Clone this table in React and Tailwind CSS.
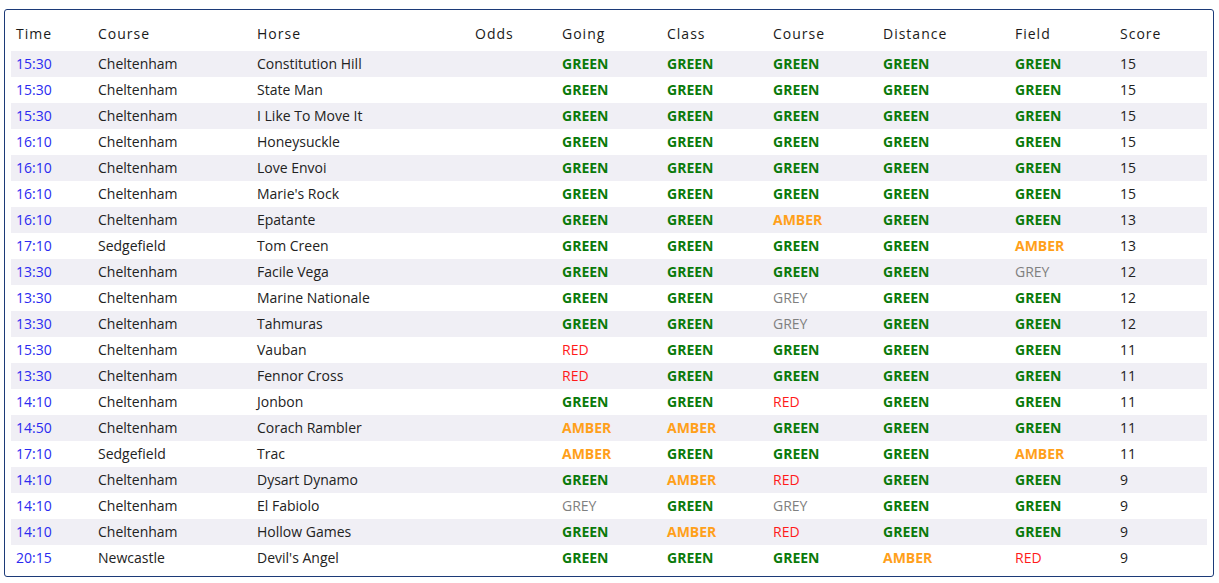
import React from 'react';

// runner rows, in score order
const rows = [
    ['15:30', 'Cheltenham', 'Constitution Hill', 'GREEN', 'GREEN', 'GREEN', 'GREEN', 'GREEN', 15],
    ['15:30', 'Cheltenham', 'State Man', 'GREEN', 'GREEN', 'GREEN', 'GREEN', 'GREEN', 15],
    ['15:30', 'Cheltenham', 'I Like To Move It', 'GREEN', 'GREEN', 'GREEN', 'GREEN', 'GREEN', 15],
    ['16:10', 'Cheltenham', 'Honeysuckle', 'GREEN', 'GREEN', 'GREEN', 'GREEN', 'GREEN', 15],
    ['16:10', 'Cheltenham', 'Love Envoi', 'GREEN', 'GREEN', 'GREEN', 'GREEN', 'GREEN', 15],
    ['16:10', 'Cheltenham', "Marie's Rock", 'GREEN', 'GREEN', 'GREEN', 'GREEN', 'GREEN', 15],
    ['16:10', 'Cheltenham', 'Epatante', 'GREEN', 'GREEN', 'AMBER', 'GREEN', 'GREEN', 13],
    ['17:10', 'Sedgefield', 'Tom Creen', 'GREEN', 'GREEN', 'GREEN', 'GREEN', 'AMBER', 13],
    ['13:30', 'Cheltenham', 'Facile Vega', 'GREEN', 'GREEN', 'GREEN', 'GREEN', 'GREY', 12],
    ['13:30', 'Cheltenham', 'Marine Nationale', 'GREEN', 'GREEN', 'GREY', 'GREEN', 'GREEN', 12],
    ['13:30', 'Cheltenham', 'Tahmuras', 'GREEN', 'GREEN', 'GREY', 'GREEN', 'GREEN', 12],
    ['15:30', 'Cheltenham', 'Vauban', 'RED', 'GREEN', 'GREEN', 'GREEN', 'GREEN', 11],
    ['13:30', 'Cheltenham', 'Fennor Cross', 'RED', 'GREEN', 'GREEN', 'GREEN', 'GREEN', 11],
    ['14:10', 'Cheltenham', 'Jonbon', 'GREEN', 'GREEN', 'RED', 'GREEN', 'GREEN', 11],
    ['14:50', 'Cheltenham', 'Corach Rambler', 'AMBER', 'AMBER', 'GREEN', 'GREEN', 'GREEN', 11],
    ['17:10', 'Sedgefield', 'Trac', 'AMBER', 'GREEN', 'GREEN', 'GREEN', 'AMBER', 11],
    ['14:10', 'Cheltenham', 'Dysart Dynamo', 'GREEN', 'AMBER', 'RED', 'GREEN', 'GREEN', 9],
    ['14:10', 'Cheltenham', 'El Fabiolo', 'GREY', 'GREEN', 'GREY', 'GREEN', 'GREEN', 9],
    ['14:10', 'Cheltenham', 'Hollow Games', 'GREEN', 'AMBER', 'RED', 'GREEN', 'GREEN', 9],
    ['20:15', 'Newcastle', "Devil's Angel", 'GREEN', 'GREEN', 'GREEN', 'AMBER', 'RED', 9],
];

const headers = [
    ['Time', 'w-[82px]'],
    ['Course', 'w-[159px]'],
    ['Horse', 'w-[218px]'],
    ['Odds', 'w-[87px]'],
    ['Going', 'w-[105px]'],
    ['Class', 'w-[106px]'],
    ['Course', 'w-[110px]'],
    ['Distance', 'w-[132px]'],
    ['Field', 'w-[105px]'],
    ['Score', 'w-[92px]'],
];

const ratingClass = {
    GREEN: 'text-[#0a7a0a] font-bold',
    AMBER: 'text-[#ffa01a] font-bold',
    RED: 'text-[#ff1a1a]',
    GREY: 'text-[#808080]',
};

function Rating({ value }) {
    return <td className={`px-[5px] ${ratingClass[value]}`}>{value}</td>;
}

export default function App() {
    return (
        <div className="pt-[9px] pl-[4px] font-['Open_Sans',sans-serif] text-[14px] text-[#222]">
            <div className="w-[1210px] border border-[#1c3a78] rounded-[3px] pl-[6px] pr-[6px] pb-[5px]">
                <table className="w-[1196px] table-fixed border-collapse">
                    <thead>
                        <tr>
                            {headers.map(([label, w], i) => (
                                <th
                                    key={i}
                                    className={`${w} px-[5px] pt-[12px] pb-[6px] text-left font-normal tracking-[1px] leading-[23px] text-[#1a1a1a]`}
                                >
                                    {label}
                                </th>
                            ))}
                        </tr>
                    </thead>
                    <tbody>
                        {rows.map((r, i) => (
                            <tr key={i} className={`h-[26px] leading-[26px] ${i % 2 === 0 ? 'bg-[#f0eff5]' : 'bg-white'}`}>
                                <td className="px-[5px] text-[#2a2af0]">{r[0]}</td>
                                <td className="px-[5px]">{r[1]}</td>
                                <td className="px-[5px]">{r[2]}</td>
                                <td className="px-[5px]"></td>
                                <Rating value={r[3]} />
                                <Rating value={r[4]} />
                                <Rating value={r[5]} />
                                <Rating value={r[6]} />
                                <Rating value={r[7]} />
                                <td className="px-[5px]">{r[8]}</td>
                            </tr>
                        ))}
                    </tbody>
                </table>
            </div>
        </div>
    );
}
